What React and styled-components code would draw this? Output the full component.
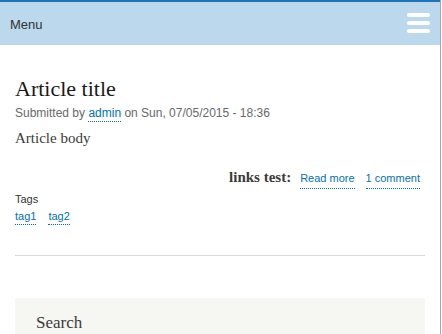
import React from 'react';
import styled, { createGlobalStyle } from 'styled-components';

const GlobalStyle = createGlobalStyle`
  html, body {
    margin: 0;
    padding: 0;
    background: #fff;
  }
`;

const Page = styled.div`
  width: 440px;
  min-height: 334px;
  border-right: 1px solid #a6a6a6;
  font-family: 'Liberation Sans', Arial, sans-serif;
  color: #3b3b3b;
  overflow: hidden;
`;

const Header = styled.header`
  height: 43px;
  border-top: 2px solid #1e72b6;
  background: #bbd8ec;
  display: flex;
  align-items: center;
  justify-content: space-between;
  padding: 0 10px;
`;

const MenuLabel = styled.span`
  font-size: 13px;
  color: #333;
  margin-top: 1px;
`;

const Burger = styled.div`
  width: 23px;
  display: flex;
  flex-direction: column;
  gap: 4px;
  margin-top: -1px;
`;

const BurgerBar = styled.span`
  display: block;
  height: 4px;
  border-radius: 2px;
  background: #fff;
`;

const Main = styled.main`
  padding: 31px 15px 0;
`;

const Title = styled.h1`
  margin: 0;
  font-family: 'Liberation Serif', Georgia, serif;
  font-weight: normal;
  font-size: 22px;
  line-height: 26px;
  color: #1a1a1a;
`;

const Meta = styled.div`
  margin-top: 3px;
  font-size: 12px;
  line-height: 17px;
  color: #68696b;
`;

const DottedLink = styled.a`
  color: #0071b3;
  text-decoration: none;
  border-bottom: 1px dotted #0071b3;
  padding-bottom: 1px;
`;

const Body = styled.p`
  margin: 6px 0 0;
  font-family: 'Liberation Serif', Georgia, serif;
  font-size: 15px;
  line-height: 20px;
  color: #3b3b3b;
`;

const LinksRow = styled.div`
  margin-top: 19px;
  padding-right: 5px;
  display: flex;
  justify-content: flex-end;
  align-items: baseline;
  gap: 11px;
  line-height: 20px;
`;

const LinksLabel = styled.span`
  font-family: 'Liberation Serif', Georgia, serif;
  font-weight: bold;
  font-size: 15px;
  color: #3b3b3b;
  margin-right: -2px;
`;

const SmallLink = styled(DottedLink)`
  font-size: 11px;
  padding-bottom: 0;
`;

const TagsLabel = styled.div`
  margin-top: 2px;
  font-size: 11px;
  line-height: 16px;
  color: #333;
`;

const TagList = styled.div`
  margin-top: 1px;
  display: flex;
  gap: 12px;
  line-height: 16px;
`;

const Divider = styled.hr`
  margin: 30px 0 0;
  border: 0;
  border-top: 1px solid #d8d9dc;
`;

const SearchBlock = styled.section`
  margin-top: 42px;
  background: #f6f6f2;
  padding: 14px 21px 20px;
`;

const SearchTitle = styled.h2`
  margin: 0;
  font-family: 'Liberation Serif', Georgia, serif;
  font-weight: normal;
  font-size: 17px;
  line-height: 22px;
  color: #3b3b3b;
`;

export default function App() {
  return (
    <>
      <GlobalStyle />
      <Page>
        <Header>
          <MenuLabel>Menu</MenuLabel>
          <Burger>
            <BurgerBar />
            <BurgerBar />
            <BurgerBar />
          </Burger>
        </Header>
        <Main>
          <Title>Article title</Title>
          <Meta>
            Submitted by <DottedLink href="#">admin</DottedLink> on Sun, 07/05/2015 - 18:36
          </Meta>
          <Body>Article body</Body>
          <LinksRow>
            <LinksLabel>links test:</LinksLabel>
            <SmallLink href="#">Read more</SmallLink>
            <SmallLink href="#">1 comment</SmallLink>
          </LinksRow>
          <TagsLabel>Tags</TagsLabel>
          <TagList>
            <SmallLink href="#">tag1</SmallLink>
            <SmallLink href="#">tag2</SmallLink>
          </TagList>
          <Divider />
          <SearchBlock>
            <SearchTitle>Search</SearchTitle>
          </SearchBlock>
        </Main>
      </Page>
    </>
  );
}
